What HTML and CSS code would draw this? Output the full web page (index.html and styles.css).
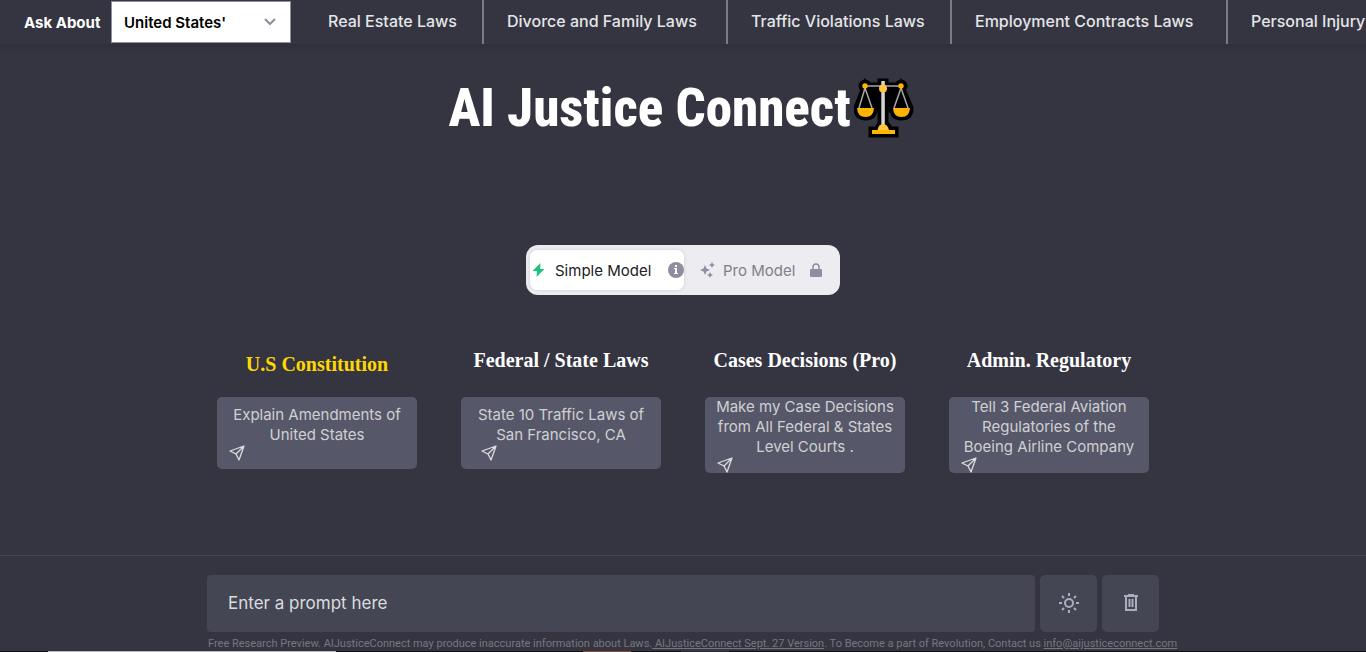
FILE: index.html
```html
<!DOCTYPE html>
<html lang="en">
<head>
<meta charset="utf-8">
<meta name="viewport" content="width=device-width, initial-scale=1">
<title>AI Justice Connect</title>
<link rel="stylesheet" href="styles.css">
</head>
<body>
<header class="topbar">
  <label class="ask" for="country">Ask About</label>
  <div class="select-wrap">
    <select id="country" class="country"><option>United States'</option></select>
    <svg class="chevron" viewBox="0 0 14 8" aria-hidden="true"><path d="M2 1l5 5 5-5"/></svg>
  </div>
  <nav class="topics">
    <a href="#estate">Real Estate Laws</a>
    <a href="#family">Divorce and Family Laws</a>
    <a href="#traffic">Traffic Violations Laws</a>
    <a href="#contracts">Employment Contracts Laws</a>
    <a href="#injury">Personal Injury</a>
  </nav>
</header>
<main class="main">
  <h1 class="title">AI Justice Connect
    <svg class="scales" viewBox="0 0 60 60" aria-hidden="true">
      <path class="outline" d="M27 4h4v43h-4zM11 8h36v2H11zM11 9L3 30q0 9 8.500 9T20 30zM47 9l-8 21q0 9 8.500 9t8.500-9zM18 52h6q1-6 5.500-6t5.500 6h6v4H18z"/>
      <path class="outline" d="M12 9h34l-8 22h-18z"/>
      <circle class="outline" cx="11" cy="8" r="3"/><circle class="outline" cx="47" cy="8" r="3"/>
      <path class="wire" d="M11 8h36M11 10L5 30M11 10l7 20M47 10l-7 20M47 10l7 20"/>
      <path class="pole" d="M27.300 3h3.500v44h-3.500z"/>
      <path class="gold" d="M3 30h17q-.5 9-8.500 9T3 30zM39 30h17q-.5 9-8.500 9T39 30zM18 52h23v4H18z"/>
      <path class="dome" d="M23.500 52q1-6 5.500-6t6 6z"/>
      <circle class="gold" cx="11" cy="8" r="2.700"/><circle class="gold" cx="47" cy="8" r="2.700"/><circle class="dome" cx="29" cy="10.500" r="4"/>
    </svg>
  </h1>
  <div class="models">
    <button class="model active">
      <svg class="bolt" viewBox="0 0 14 16" aria-hidden="true"><path d="M9 1L1 9h4.500L5 15l8-8H8.500z"/></svg>
      <span>Simple Model</span>
      <svg class="info" viewBox="0 0 16 16" aria-hidden="true"><circle cx="8" cy="8" r="8"/><path d="M7 3h2v2H7zM6 6h3v5h1v1H6v-1h1V7H6z"/></svg>
    </button>
    <button class="model">
      <svg class="spark" viewBox="0 0 16 16" aria-hidden="true"><path d="M5 3l1.500 3.500L10 8 6.500 9.500 5 13 3.500 9.500 0 8l3.500-1.500zM12 0l1 2 2 1-2 1-1 2-1-2-2-1 2-1zM10 10l1 2 2 1-2 1-1 2-1-2-2-1 2-1z"/></svg>
      <span>Pro Model</span>
      <svg class="lock" viewBox="0 0 12 14" aria-hidden="true"><path d="M3 7V4a3 3 0 0 1 6 0v3" class="shackle"/><rect y="6" width="12" height="8" rx="1"/></svg>
    </button>
  </div>
  <div class="cards">
    <section class="column">
      <h2 class="heading current">U.S Constitution</h2>
      <button class="card"><span>Explain Amendments of<br>United States</span><svg class="send" viewBox="0 0 16 16" aria-hidden="true"><path d="M15 1L1 6l6 3 3 6zM15 1L7 9"/></svg></button>
    </section>
    <section class="column">
      <h2 class="heading">Federal / State Laws</h2>
      <button class="card inset"><span>State 10 Traffic Laws of<br>San Francisco, CA</span><svg class="send" viewBox="0 0 16 16" aria-hidden="true"><path d="M15 1L1 6l6 3 3 6zM15 1L7 9"/></svg></button>
    </section>
    <section class="column">
      <h2 class="heading">Cases Decisions (Pro)</h2>
      <button class="card tall"><span>Make my Case Decisions<br>from All Federal &amp; States<br>Level Courts .</span><svg class="send" viewBox="0 0 16 16" aria-hidden="true"><path d="M15 1L1 6l6 3 3 6zM15 1L7 9"/></svg></button>
    </section>
    <section class="column">
      <h2 class="heading">Admin. Regulatory</h2>
      <button class="card tall"><span>Tell 3 Federal Aviation<br>Regulatories of the<br>Boeing Airline Company</span><svg class="send" viewBox="0 0 16 16" aria-hidden="true"><path d="M15 1L1 6l6 3 3 6zM15 1L7 9"/></svg></button>
    </section>
  </div>
</main>
<footer class="composer">
  <form class="controls">
    <input class="prompt" type="text" placeholder="Enter a prompt here" aria-label="Enter a prompt here">
    <button class="tool" type="button" aria-label="Light mode"><svg viewBox="0 0 22 22"><circle cx="11" cy="11" r="4"/><path d="M11 1v3M11 18v3M1 11h3M18 11h3M4 4l2 2M16 16l2 2M18 4l-2 2M6 16l-2 2"/></svg></button>
    <button class="tool" type="button" aria-label="Delete chat"><svg viewBox="0 0 22 22"><path d="M4 4h14M8 3h6M6 4v14h10V4M9.500 7v8M12.500 7v8"/></svg></button>
  </form>
  <p class="note">Free Research Preview. AIJusticeConnect may produce inaccurate information about Laws.<a href="#version"> AIJusticeConnect Sept. 27 Version</a>. To Become a part of Revolution, Contact us <a href="mailto:info@aijusticeconnect.com">info@aijusticeconnect.com</a></p>
</footer>
<div class="edge"></div>
</body>
</html>
```
FILE: styles.css
```css
* { box-sizing: border-box; }
body {
  margin: 0;
  height: 100vh;
  overflow: hidden;
  display: flex;
  flex-direction: column;
  background: #343541;
  color: #fff;
  font-family: Inter, "Open Sans", sans-serif;
}
button { border: 0; font: inherit; cursor: pointer; }
svg { flex: none; }
.topbar {
  flex: none;
  display: flex;
  align-items: center;
  height: 44px;
  padding-left: 24px;
  overflow: hidden;
  box-shadow: 0 2px 8px rgba(0, 0, 0, 0.15);
}
.ask { width: 87px; flex: none; font-size: 15px; font-weight: 700; white-space: nowrap; }
.select-wrap { position: relative; width: 180px; flex: none; }
.country {
  display: block;
  width: 100%;
  height: 42px;
  padding: 0 12px;
  appearance: none;
  border: 1px solid #8e8ea0;
  border-radius: 0;
  background: #fff;
  color: #000;
  font: 600 15px Inter, sans-serif;
}
.chevron { position: absolute; right: 14px; top: 17px; width: 14px; height: 8px; fill: none; stroke: #8e8ea0; stroke-width: 2; pointer-events: none; }
.topics { display: grid; grid-template-columns: 193px 244px 224px 276px 138px; flex: none; align-self: stretch; }
.topics a {
  border-right: 2px solid #7b7b84;
  color: #e5e5e8;
  font-size: 16px;
  font-weight: 500;
  line-height: 43px;
  padding-left: 23px;
  text-decoration: none;
  white-space: nowrap;
}
.topics a:first-child { padding-left: 37px; }
.topics a:last-child { border-right: 0; }
.main { flex: 1; display: flex; flex-direction: column; align-items: center; }
.title {
  display: flex;
  align-items: center;
  gap: 3px;
  height: 64px;
  margin: 32px 0 105px;
  padding-right: 4px;
  font: 800 53px/60px "Roboto Condensed", Roboto, sans-serif;
  white-space: nowrap;
}
.scales { width: 60px; height: 60px; }
.outline { fill: #000; stroke: #000; stroke-width: 7; }
.pole { fill: #d6d6d6; }
.wire { fill: none; stroke: #a7a7a7; stroke-width: 1.5; }
.gold { fill: #ffb400; }
.dome { fill: #ffc440; }
.models { display: flex; gap: 16px; width: 314px; height: 50px; padding: 5px 4px; border-radius: 12px; background: #ececf1; }
.model { display: flex; align-items: center; padding: 0; background: none; color: #80808a; font-size: 15px; white-space: nowrap; }
.active { width: 154px; border-radius: 7px; background: #fff; color: #202123; box-shadow: 0 0 4px rgba(0, 0, 0, 0.12); }
.model span { flex: 1; text-align: left; }
.model:not(.active) { width: 122px; }
.bolt { width: 15px; height: 16px; margin: 0 9px 0 1px; fill: #19c37d; }
.info { width: 16px; height: 16px; fill: #8e8ea0; }
.info path { fill: #fff; }
.spark { width: 16px; height: 16px; margin-right: 7px; fill: #8e8ea0; }
.lock { width: 12px; height: 14px; fill: #8e8ea0; }
.shackle { fill: none; stroke: #8e8ea0; stroke-width: 1.5; }
.cards { display: flex; justify-content: center; gap: 44px; margin-top: 52px; }
.column { width: 200px; text-align: center; }
.heading { height: 50px; margin: 0; font: 700 20px/26px "Liberation Serif", serif; white-space: nowrap; }
.current { padding-top: 4px; color: #ffd700; }
.card {
  display: flex;
  flex-direction: column;
  width: 100%;
  height: 72px;
  padding: 8px 12px;
  border-radius: 5px;
  background: #565869;
  color: #d0d0d3;
  font-size: 15px;
  line-height: 20px;
  text-align: center;
  white-space: nowrap;
}
.card span { align-self: center; }
.card.tall { height: 76px; padding-top: 0; }
.card.inset .send { margin-left: 8px; }
.send { width: 16px; height: 16px; fill: none; stroke: #dcdcdf; stroke-width: 1.3; stroke-linejoin: round; }
.composer { flex: none; padding: 19px 16px 0; border-top: 1px solid #444653; }
.controls { display: flex; gap: 5px; max-width: 952px; margin: 0 auto; }
.prompt { flex: 1; min-width: 0; height: 57px; padding: 0 21px 2px; border: 0; border-radius: 4px; background: #444654; color: #fff; font: 17px Inter, sans-serif; }
.prompt::placeholder { color: #dcdcdf; }
.tool { display: grid; place-items: center; width: 57px; height: 57px; padding: 0 0 1px; border-radius: 5px; background: #444654; }
.tool svg { width: 22px; height: 22px; fill: none; stroke: #acacbe; stroke-width: 2; }
.note { max-width: 1018px; margin: 4px auto 0; padding-left: 34px; font-family: Roboto, sans-serif; font-size: 11px; line-height: 15px; color: #777780; white-space: nowrap; }
.note a { color: inherit; }
.edge { flex: none; height: 1px; background: linear-gradient(90deg, #0d0d12 48px, #b8b8bd 48px 336px, #0d0d12 336px 583px, #8c4a28 583px 631px, #0d0d12 631px 681px, #2c2c34 681px 729px, #0d0d12 729px); }
```
